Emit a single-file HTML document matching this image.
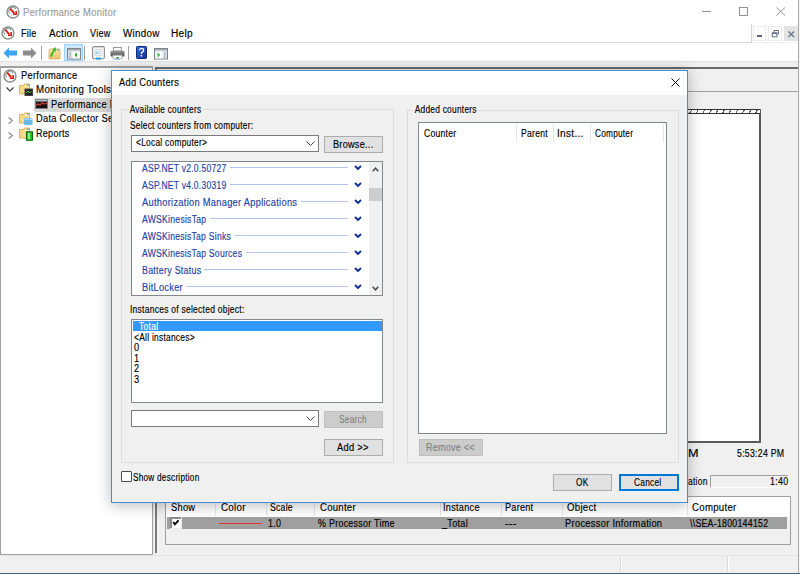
<!DOCTYPE html>
<html><head><meta charset="utf-8">
<style>
*{margin:0;padding:0;box-sizing:border-box}
html,body{width:800px;height:574px;overflow:hidden;background:#F0F0F0;font-family:"Liberation Sans",sans-serif;font-size:10px;color:#000}
.a{position:absolute}
.t{position:absolute;white-space:nowrap;line-height:12px;transform-origin:0 0;-webkit-text-stroke:0.15px currentColor;letter-spacing:0.3px}
.btn{position:absolute;background:#E1E1E1;border:1px solid #ADADAD}
.dis{background:#CCCCCC;border-color:#BFBFBF}
.hl{position:absolute;height:1px}
.vl{position:absolute;width:1px}
</style></head><body>
<!-- ===== main window title + menu ===== -->
<div class="a" style="left:0;top:0;width:800px;height:42px;background:#fff"></div>
<svg class="a" style="left:6px;top:4.5px" width="14" height="14" viewBox="0 0 14 14"><circle cx="7" cy="7" r="6" fill="#fff" stroke="#8c8c8c" stroke-width="1.4"/><path d="M3.6 8.6 A4 4 0 0 1 10 3.8" fill="none" stroke="#6f8f80" stroke-width="1"/><path d="M4.2 3.6 L8.2 8.4" stroke="#e01818" stroke-width="1.9" fill="none"/><path d="M7 9.2 H10.2 V6" stroke="#e01818" stroke-width="1.6" fill="none"/></svg>
<div class="t" style="left:23.01px;top:6.90px;color:#9a9a9a;font-size:10px;transform:scaleX(0.943)">Performance Monitor</div>
<div class="hl" style="left:702px;top:11px;width:9px;background:#909090"></div>
<div class="a" style="left:739px;top:7px;width:9px;height:9px;border:1px solid #909090"></div>
<svg class="a" style="left:776px;top:7px" width="10" height="9"><path d="M0.5 0.5 L9 8.5 M9 0.5 L0.5 8.5" stroke="#909090" stroke-width="1"/></svg>

<svg class="a" style="left:1.2px;top:26.3px" width="14" height="14" viewBox="0 0 14 14"><circle cx="7" cy="7" r="6" fill="#fff" stroke="#8c8c8c" stroke-width="1.4"/><path d="M3.6 8.6 A4 4 0 0 1 10 3.8" fill="none" stroke="#6f8f80" stroke-width="1"/><path d="M4.2 3.6 L8.2 8.4" stroke="#e01818" stroke-width="1.9" fill="none"/><path d="M7 9.2 H10.2 V6" stroke="#e01818" stroke-width="1.6" fill="none"/></svg>
<div class="t" style="left:20.65px;top:27.90px;font-size:10px;transform:scaleX(0.905)">File</div>
<div class="t" style="left:48.71px;top:27.90px;font-size:10px;transform:scaleX(0.986)">Action</div>
<div class="t" style="left:89.93px;top:27.90px;font-size:10px;transform:scaleX(0.905)">View</div>
<div class="t" style="left:123.23px;top:27.90px;font-size:10px;transform:scaleX(0.980)">Window</div>
<div class="t" style="left:171.14px;top:27.90px;font-size:10px;transform:scaleX(1.010)">Help</div>
<div class="hl" style="left:0;top:42px;width:752px;background:#D5D5D5"></div>
<div class="vl" style="left:751px;top:24px;height:19px;background:#D5D5D5"></div>
<div class="a" style="left:753px;top:26px;width:13px;height:15px;background:#fff;border:1px solid #ececec"></div>
<div class="hl" style="left:757px;top:35px;width:5px;height:1.5px;background:#56667c"></div>
<div class="a" style="left:768px;top:26px;width:14px;height:15px;background:#fff;border:1px solid #ececec"></div>
<svg class="a" style="left:771px;top:29px" width="9" height="9"><path d="M3 3 V1.5 H7.5 V5 H6" fill="none" stroke="#5e6e84" stroke-width="1"/><rect x="1.3" y="3.8" width="4.6" height="4" fill="none" stroke="#5e6e84" stroke-width="1"/><path d="M1.3 4.3 H5.9" stroke="#5e6e84" stroke-width="1.2"/></svg>
<div class="a" style="left:784px;top:26px;width:14px;height:15px;background:#E3E3E3"></div>
<svg class="a" style="left:788px;top:30.5px" width="7" height="7"><path d="M0.5 0.5 L6 6 M6 0.5 L0.5 6" stroke="#5e6e84" stroke-width="1.1"/></svg>

<!-- ===== toolbar ===== -->
<div class="a" style="left:0;top:43px;width:798px;height:18px;background:#fff"></div>
<div class="hl" style="left:0;top:61px;width:798px;background:#E3E3E3"></div>
<svg class="a" style="left:3px;top:47px" width="15" height="12" viewBox="0 0 15 12"><path d="M0.5 6 L6 0.5 V3.5 H14 V8.5 H6 V11.5 Z" fill="#3da4f2"/></svg>
<svg class="a" style="left:22px;top:47px" width="15" height="12" viewBox="0 0 15 12"><path d="M14.5 6 L9 0.5 V3.5 H1 V8.5 H9 V11.5 Z" fill="#8c8c8c"/></svg>
<div class="vl" style="left:41px;top:46px;height:14px;background:#A0A0A0"></div>
<svg class="a" style="left:48px;top:46px" width="13" height="14"><defs><linearGradient id="fg" x1="0" y1="0" x2="0" y2="1"><stop offset="0" stop-color="#fbe7a8"/><stop offset="1" stop-color="#eac36c"/></linearGradient></defs><rect x="1" y="3" width="11" height="10" rx="0.5" fill="url(#fg)" stroke="#d9b466" stroke-width="0.8"/><path d="M2.3 10.2 Q3.2 6.3 5.4 4.4 L4.6 3.2 L7.9 1.6 L7.6 5.3 L6.6 4.9 Q4.7 7 3.9 10.4 Z" fill="#3cc43c" stroke="#23a023" stroke-width="0.4"/><rect x="9" y="3.2" width="2.2" height="1.6" fill="#7aa6d0"/></svg>
<div class="a" style="left:64px;top:44px;width:19px;height:17px;background:#CCE8FF;border:1px solid #99D1FF"></div>
<svg class="a" style="left:66.5px;top:48px" width="14" height="12"><rect x="0.5" y="0.5" width="13" height="10.5" fill="#e6e8ea" stroke="#7d8288"/><rect x="1" y="1" width="12" height="1.6" fill="#a9aeb5"/><rect x="1.5" y="3.6" width="3" height="6.8" fill="#d8dde3"/><rect x="2.2" y="4.5" width="1.6" height="0.9" fill="#7fa4c8"/><rect x="2.2" y="6.5" width="1.6" height="0.9" fill="#7fa4c8"/><rect x="2.2" y="8.5" width="1.6" height="0.9" fill="#7fa4c8"/><rect x="5.5" y="3.6" width="7" height="6.8" fill="#fff"/><path d="M10 4.6 L7.3 7 L10 9.4 Z" fill="#2eb82e"/></svg>
<div class="vl" style="left:84px;top:46px;height:14px;background:#A0A0A0"></div>
<svg class="a" style="left:91.5px;top:46px" width="13" height="14"><rect x="0.6" y="0.6" width="11.8" height="12.2" rx="1.5" fill="#f6f6f6" stroke="#8c8c8c" stroke-width="1.1"/><path d="M2.5 3.5 H10.5 M2.5 5.5 H10.5 M2.5 7.5 H10.5 M2.5 9.5 H10.5" stroke="#c9d3dc" stroke-width="0.8"/><path d="M5 3 V10.5 M7.5 3 V10.5" stroke="#d5dde4" stroke-width="0.6"/><rect x="3.5" y="6" width="2" height="2" fill="#8cc8ee"/><rect x="4" y="11.6" width="5" height="2" fill="#2a9ee0"/></svg>
<svg class="a" style="left:109.5px;top:46.5px" width="15" height="13"><rect x="3.5" y="0.5" width="8" height="3.5" fill="#fbfbfb" stroke="#9a9a9a"/><defs><linearGradient id="pg" x1="0" y1="0" x2="0" y2="1"><stop offset="0" stop-color="#9a9a9a"/><stop offset="1" stop-color="#4a4a4a"/></linearGradient></defs><rect x="0.5" y="3.8" width="14" height="5.6" rx="1" fill="url(#pg)"/><rect x="3" y="8.2" width="9" height="3.6" fill="#fff" stroke="#a8a8a8" stroke-width="0.8"/><path d="M6 10 L7.5 11.8 L9 10 Z" fill="#1f8a56"/><path d="M5 12.2 H10" stroke="#6ab4e8" stroke-width="0.9"/></svg>
<div class="vl" style="left:128px;top:46px;height:14px;background:#A0A0A0"></div>
<svg class="a" style="left:136px;top:46px" width="11" height="13"><defs><linearGradient id="hg" x1="0" y1="0" x2="1" y2="1"><stop offset="0" stop-color="#3b6ee0"/><stop offset="1" stop-color="#12308f"/></linearGradient></defs><rect x="0.5" y="0.5" width="10" height="12" rx="0.8" fill="url(#hg)" stroke="#0f2a7a"/><path d="M3.6 4.3 Q3.8 2.3 5.7 2.3 Q7.7 2.4 7.6 4.2 Q7.5 5.4 6.2 6.1 Q5.4 6.6 5.4 8" fill="none" stroke="#fff" stroke-width="1.3"/><rect x="4.7" y="9" width="1.5" height="1.5" fill="#fff"/></svg>
<svg class="a" style="left:154px;top:48px" width="14" height="12"><rect x="0.5" y="0.5" width="13" height="10.5" fill="#e6e8ea" stroke="#7d8288"/><rect x="1" y="1" width="12" height="1.6" fill="#a9aeb5"/><rect x="9.5" y="3.6" width="3" height="6.8" fill="#d8dde3"/><rect x="10.2" y="4.5" width="1.6" height="0.9" fill="#7fa4c8"/><rect x="10.2" y="6.5" width="1.6" height="0.9" fill="#7fa4c8"/><rect x="10.2" y="8.5" width="1.6" height="0.9" fill="#7fa4c8"/><rect x="1.5" y="3.6" width="7" height="6.8" fill="#fff"/><path d="M3.5 4.6 L6.2 7 L3.5 9.4 Z" fill="#2eb82e"/></svg>

<!-- ===== tree panel ===== -->
<div class="a" style="left:0;top:66px;width:153px;height:489px;background:#fff;border-top:2px solid #A0A0A0;border-left:1px solid #A0A0A0;border-right:1px solid #A0A0A0;border-bottom:1px solid #A0A0A0"></div>
<svg class="a" style="left:3.2px;top:68.5px" width="14" height="14" viewBox="0 0 14 14"><circle cx="7" cy="7" r="6" fill="#fff" stroke="#8c8c8c" stroke-width="1.4"/><path d="M3.6 8.6 A4 4 0 0 1 10 3.8" fill="none" stroke="#6f8f80" stroke-width="1"/><path d="M4.2 3.6 L8.2 8.4" stroke="#e01818" stroke-width="1.9" fill="none"/><path d="M7 9.2 H10.2 V6" stroke="#e01818" stroke-width="1.6" fill="none"/></svg>
<div class="t" style="left:20.72px;top:69.50px;font-size:10px;transform:scaleX(0.932)">Performance</div>
<svg class="a" style="left:6px;top:87px" width="8" height="6"><path d="M0.5 0.5 L4 4 L7.5 0.5" fill="none" stroke="#404040" stroke-width="1.2"/></svg>
<svg class="a" style="left:19px;top:83px" width="14" height="14"><path d="M0.5 2.5 H4.5 L5.5 1 H10.5 V11 H0.5 Z" fill="#f6d98a" stroke="#d9b25c"/><path d="M6 2.5 H10 V4 H6 Z" fill="#fff3c8"/><circle cx="9" cy="2.2" r="0.9" fill="#5aa0e0"/><rect x="6" y="6" width="7.5" height="6.5" fill="#222" stroke="#444"/><path d="M7 10 L9 8 L10.5 10 L12.5 8" stroke="#3ed23e" fill="none"/></svg>
<div class="t" style="left:35.64px;top:83.70px;font-size:10px;transform:scaleX(0.972)">Monitoring Tools</div>
<div class="a" style="left:34px;top:98px;width:78px;height:14px;background:#D9D9D9"></div>
<svg class="a" style="left:35px;top:99px" width="13" height="10"><rect x="0.5" y="0.5" width="12" height="9" fill="#1a1212" stroke="#808080"/><rect x="1" y="1" width="11" height="1.5" fill="#b8c0c8"/><path d="M1 6.5 L3 5 L5 6 L7 3.8 L9 5 L12 4.5" stroke="#e23b3b" fill="none" stroke-width="1.1"/></svg>
<div class="t" style="left:50.73px;top:98.70px;font-size:10px;transform:scaleX(0.923)">Performance Monitor</div>
<svg class="a" style="left:8px;top:117px" width="6" height="8"><path d="M0.6 0.5 L4.4 3.6 L0.6 6.8" fill="none" stroke="#8a8a8a" stroke-width="1.2"/></svg>
<svg class="a" style="left:19px;top:112px" width="14" height="14"><path d="M0.5 2.5 H4.5 L5.5 1 H10.5 V11 H0.5 Z" fill="#f6d98a" stroke="#d9b25c"/><path d="M6 2.5 H10 V4 H6 Z" fill="#fff3c8"/><circle cx="9" cy="2.2" r="0.9" fill="#5aa0e0"/><path d="M5 6.5 Q8.5 5 13.5 6.5 V12.5 Q8.5 14 5 12.5 Z" fill="#6ab8e8"/><path d="M5.5 7.5 Q8.5 6.3 13 7.5" stroke="#c8e6f8" fill="none"/></svg>
<div class="t" style="left:35.67px;top:113.00px;font-size:10px;transform:scaleX(0.928)">Data Collector Sets</div>
<svg class="a" style="left:8px;top:132px" width="6" height="8"><path d="M0.6 0.5 L4.4 3.6 L0.6 6.8" fill="none" stroke="#8a8a8a" stroke-width="1.2"/></svg>
<svg class="a" style="left:19px;top:127px" width="14" height="15"><path d="M0.5 2.5 H4.5 L5.5 1 H10.5 V11 H0.5 Z" fill="#f6d98a" stroke="#d9b25c"/><path d="M6 2.5 H10 V4 H6 Z" fill="#fff3c8"/><circle cx="9" cy="2.2" r="0.9" fill="#5aa0e0"/><rect x="7.5" y="4.8" width="6" height="8.5" fill="#22c022" stroke="#0a6a0a"/><rect x="9" y="6" width="2" height="6" fill="#8ef08e"/></svg>
<div class="t" style="left:35.75px;top:127.50px;font-size:10px;transform:scaleX(0.903)">Reports</div>

<!-- ===== right panel ===== -->
<div class="vl" style="left:155px;top:67px;height:486px;width:2px;background:#7a7a7a"></div>
<div class="a" style="left:155px;top:67px;width:643px;height:2px;background:#6a6a6a"></div>
<div class="hl" style="left:158px;top:91px;width:640px;background:#A0A0A0"></div>
<div class="vl" style="left:798px;top:0;height:574px;background:#ABABAB"></div><div class="vl" style="left:799px;top:0;height:574px;background:#F4F4F4"></div>
<!-- graph -->
<div class="a" style="left:600px;top:109px;width:161px;height:334px;background:#fff;border-right:2px solid #5a5a5a;border-bottom:2px solid #5a5a5a"></div>
<div class="a" style="left:600px;top:109px;width:160px;height:5px;border-top:1px solid #303030;border-bottom:1px solid #303030;background:repeating-linear-gradient(120deg,#fff 0 4.6px,#606060 4.6px 5.7px)"></div>
<div class="t" style="left:687.61px;top:447.90px;font-size:10px;transform:scaleX(1.267)">M</div>
<div class="t" style="left:736.72px;top:447.90px;font-size:10px;transform:scaleX(0.875)">5:53:24 PM</div>
<div class="t" style="left:687.60px;top:475.70px;font-size:10px;transform:scaleX(0.849)">ation</div>
<div class="a" style="left:710px;top:475px;width:79px;height:13px;border-top:1px solid #A0A0A0;border-left:1px solid #A0A0A0;border-bottom:1px solid #fff;border-right:1px solid #fff"></div>
<div class="t" style="left:770.24px;top:475.70px;font-size:10px;transform:scaleX(0.890)">1:40</div>
<!-- legend -->
<div class="a" style="left:165px;top:496px;width:626px;height:49px;border:1px solid #A0A0A0;background:#F0F0F0"></div>
<div class="a" style="left:166px;top:497px;width:624px;height:20px;background:#fff"></div>
<div class="vl" style="left:215px;top:498px;height:18px;background:#E5E5E5"></div>
<div class="vl" style="left:266px;top:498px;height:18px;background:#E5E5E5"></div>
<div class="vl" style="left:314px;top:498px;height:18px;background:#E5E5E5"></div>
<div class="vl" style="left:440px;top:498px;height:18px;background:#E5E5E5"></div>
<div class="vl" style="left:501px;top:498px;height:18px;background:#E5E5E5"></div>
<div class="vl" style="left:562px;top:498px;height:18px;background:#E5E5E5"></div>
<div class="vl" style="left:687px;top:498px;height:18px;background:#E5E5E5"></div>
<div class="t" style="left:170.95px;top:501.90px;font-size:10px;transform:scaleX(0.928)">Show</div>
<div class="t" style="left:220.50px;top:501.90px;font-size:10px;transform:scaleX(0.976)">Color</div>
<div class="t" style="left:269.99px;top:501.90px;font-size:10px;transform:scaleX(0.863)">Scale</div>
<div class="t" style="left:319.61px;top:501.90px;font-size:10px;transform:scaleX(0.952)">Counter</div>
<div class="t" style="left:443.46px;top:501.90px;font-size:10px;transform:scaleX(0.914)">Instance</div>
<div class="t" style="left:505.45px;top:501.90px;font-size:10px;transform:scaleX(0.908)">Parent</div>
<div class="t" style="left:567.14px;top:501.90px;font-size:10px;transform:scaleX(0.963)">Object</div>
<div class="t" style="left:691.61px;top:501.90px;font-size:10px;transform:scaleX(0.963)">Computer</div>
<div class="a" style="left:167px;top:517px;width:620px;height:12px;background:#A0A0A0"></div>
<div class="a" style="left:170px;top:517px;width:12px;height:12px;background:#EDEDED"></div><div class="a" style="left:170px;top:517px;width:11px;height:11px;background:#fff;border-top:2px solid #8a8a8a;border-left:2px solid #8a8a8a"></div>
<svg class="a" style="left:170px;top:517px" width="12" height="12"><path d="M3.2 5.2 L4.9 7.3 L8.5 3.3" fill="none" stroke="#000" stroke-width="2"/></svg>
<div class="hl" style="left:219px;top:523px;width:43px;background:#E03535;height:1px"></div>
<div class="t" style="left:268.33px;top:517.90px;font-size:10px;transform:scaleX(0.894)">1.0</div>
<div class="t" style="left:318.42px;top:517.90px;font-size:10px;transform:scaleX(0.892)">% Processor Time</div>
<div class="t" style="left:442.15px;top:517.90px;font-size:10px;transform:scaleX(0.910)">_Total</div>
<div class="t" style="left:505.01px;top:517.90px;font-size:10px;transform:scaleX(1.059)">---</div>
<div class="t" style="left:565.02px;top:517.90px;font-size:10px;transform:scaleX(0.935)">Processor Information</div>
<div class="t" style="left:689.82px;top:517.90px;font-size:10px;transform:scaleX(0.877)">\\SEA-1800144152</div>
<!-- status bar -->
<div class="hl" style="left:0;top:555px;width:798px;background:#E3E3E3"></div>
<div class="vl" style="left:620px;top:556px;height:16px;background:#DADADA"></div><div class="vl" style="left:621px;top:556px;height:16px;background:#fff"></div><div class="vl" style="left:727px;top:556px;height:16px;background:#DADADA"></div><div class="vl" style="left:728px;top:556px;height:16px;background:#fff"></div>
<div class="a" style="left:0;top:573px;width:800px;height:1px;background:#3f5f7a"></div>

<!-- ===== dialog ===== -->
<div id="dlg" class="a" style="left:111px;top:70px;width:577px;height:433px;background:#F0F0F0;border:1px solid #3D8FDB;box-shadow:0 2px 14px rgba(0,0,0,0.28)">
</div>
<div class="a" style="left:112px;top:71px;width:575px;height:24px;background:#fff"></div>
<div class="t" style="left:118.53px;top:77.00px;font-size:10px;transform:scaleX(0.929)">Add Counters</div>
<svg class="a" style="left:671px;top:78px" width="9" height="9"><path d="M0.5 0.5 L8.5 8.5 M8.5 0.5 L0.5 8.5" stroke="#111" stroke-width="1"/></svg>

<!-- left group -->
<div class="a" style="left:121px;top:109px;width:273px;height:354px;border:1px solid #DCDCDC"></div>
<div class="t" style="left:127.76px;top:103.80px;background:#F0F0F0;padding:0 2px;font-size:10px;transform:scaleX(0.824)">Available counters</div>
<div class="t" style="left:130.21px;top:119.70px;font-size:10px;transform:scaleX(0.833)">Select counters from computer:</div>
<div class="a" style="left:131px;top:135px;width:188px;height:17px;background:#fff;border:1px solid #7A7A7A"></div>
<div class="t" style="left:135.61px;top:137.30px;font-size:10px;transform:scaleX(0.839)">&lt;Local computer&gt;</div>
<svg class="a" style="left:306px;top:141px" width="9" height="5"><path d="M0.5 0.5 L4.5 4.5 L8.5 0.5" fill="none" stroke="#404040" stroke-width="1"/></svg>
<div class="btn" style="left:324px;top:136px;width:59px;height:17px"></div>
<div class="t" style="left:332.75px;top:138.50px;font-size:10px;transform:scaleX(0.912)">Browse...</div>

<div class="a" style="left:131px;top:161px;width:252px;height:135px;background:#fff;border:1px solid #828790"></div>
<div class="a" style="left:369px;top:162px;width:13px;height:133px;background:#F0F0F0"></div>
<svg class="a" style="left:371.5px;top:167px" width="7" height="5"><path d="M0.7 4.2 L3.5 1.2 L6.3 4.2" fill="none" stroke="#4a4a4a" stroke-width="1.5"/></svg>
<div class="a" style="left:369px;top:188px;width:13px;height:13px;background:#CDCDCD"></div>
<svg class="a" style="left:371.5px;top:285.5px" width="7" height="5"><path d="M0.7 0.8 L3.5 3.8 L6.3 0.8" fill="none" stroke="#4a4a4a" stroke-width="1.5"/></svg>

<div class="t" style="left:142.25px;top:162.75px;color:#1E3FA6;font-size:10px;transform:scaleX(0.854)">ASP.NET v2.0.50727</div>
<div class="hl" style="left:230px;top:167px;width:118px;background:#B4C6EC"></div>
<svg class="a" style="left:354px;top:165px" width="8" height="6"><path d="M1 1 L4 4 L7 1" fill="none" stroke="#0A2A9A" stroke-width="1.8"/></svg>
<div class="t" style="left:142.25px;top:179.75px;color:#1E3FA6;font-size:10px;transform:scaleX(0.854)">ASP.NET v4.0.30319</div>
<div class="hl" style="left:230px;top:184px;width:118px;background:#B4C6EC"></div>
<svg class="a" style="left:354px;top:182px" width="8" height="6"><path d="M1 1 L4 4 L7 1" fill="none" stroke="#0A2A9A" stroke-width="1.8"/></svg>
<div class="t" style="left:142.23px;top:196.75px;color:#1E3FA6;font-size:10px;transform:scaleX(0.930)">Authorization Manager Applications</div>
<div class="hl" style="left:301px;top:201px;width:47px;background:#B4C6EC"></div>
<svg class="a" style="left:354px;top:199px" width="8" height="6"><path d="M1 1 L4 4 L7 1" fill="none" stroke="#0A2A9A" stroke-width="1.8"/></svg>
<div class="t" style="left:142.25px;top:213.75px;color:#1E3FA6;font-size:10px;transform:scaleX(0.862)">AWSKinesisTap</div>
<div class="hl" style="left:210px;top:218px;width:138px;background:#B4C6EC"></div>
<svg class="a" style="left:354px;top:216px" width="8" height="6"><path d="M1 1 L4 4 L7 1" fill="none" stroke="#0A2A9A" stroke-width="1.8"/></svg>
<div class="t" style="left:142.25px;top:230.75px;color:#1E3FA6;font-size:10px;transform:scaleX(0.859)">AWSKinesisTap Sinks</div>
<div class="hl" style="left:234px;top:235px;width:114px;background:#B4C6EC"></div>
<svg class="a" style="left:354px;top:233px" width="8" height="6"><path d="M1 1 L4 4 L7 1" fill="none" stroke="#0A2A9A" stroke-width="1.8"/></svg>
<div class="t" style="left:142.25px;top:247.75px;color:#1E3FA6;font-size:10px;transform:scaleX(0.860)">AWSKinesisTap Sources</div>
<div class="hl" style="left:246px;top:252px;width:102px;background:#B4C6EC"></div>
<svg class="a" style="left:354px;top:250px" width="8" height="6"><path d="M1 1 L4 4 L7 1" fill="none" stroke="#0A2A9A" stroke-width="1.8"/></svg>
<div class="t" style="left:141.57px;top:264.75px;color:#1E3FA6;font-size:10px;transform:scaleX(0.886)">Battery Status</div>
<div class="hl" style="left:204px;top:269px;width:144px;background:#B4C6EC"></div>
<svg class="a" style="left:354px;top:267px" width="8" height="6"><path d="M1 1 L4 4 L7 1" fill="none" stroke="#0A2A9A" stroke-width="1.8"/></svg>
<div class="t" style="left:141.54px;top:281.75px;color:#1E3FA6;font-size:10px;transform:scaleX(0.921)">BitLocker</div>
<div class="hl" style="left:186px;top:286px;width:162px;background:#B4C6EC"></div>
<svg class="a" style="left:354px;top:284px" width="8" height="6"><path d="M1 1 L4 4 L7 1" fill="none" stroke="#0A2A9A" stroke-width="1.8"/></svg>

<div class="t" style="left:129.74px;top:303.80px;font-size:10px;transform:scaleX(0.849)">Instances of selected object:</div>
<div class="a" style="left:131px;top:319px;width:252px;height:84px;background:#fff;border:1px solid #828790"></div>
<div class="a" style="left:133px;top:321px;width:249px;height:10px;background:#3399FF"></div>
<div class="t" style="left:134.16px;top:321.10px;color:#fff;font-size:10px;transform:scaleX(0.855)">_Total</div>
<div class="t" style="left:133.91px;top:331.70px;font-size:10px;transform:scaleX(0.842)">&lt;All instances&gt;</div>
<div class="t" style="left:133.90px;top:342.30px;font-size:10px;transform:scaleX(0.920)">0</div>
<div class="t" style="left:133.70px;top:352.70px;font-size:10px;transform:scaleX(0.920)">1</div>
<div class="t" style="left:133.83px;top:363.20px;font-size:10px;transform:scaleX(0.920)">2</div>
<div class="t" style="left:133.79px;top:373.80px;font-size:10px;transform:scaleX(0.920)">3</div>

<div class="a" style="left:131px;top:410px;width:188px;height:17px;background:#fff;border:1px solid #7A7A7A"></div>
<svg class="a" style="left:306px;top:416px" width="9" height="5"><path d="M0.5 0.5 L4.5 4.5 L8.5 0.5" fill="none" stroke="#404040" stroke-width="1"/></svg>
<div class="btn dis" style="left:324px;top:411px;width:59px;height:17px"></div>
<div class="t" style="left:339.31px;top:413.70px;color:#838383;font-size:10px;transform:scaleX(0.829)">Search</div>
<div class="btn" style="left:324px;top:439px;width:59px;height:17px"></div>
<div class="t" style="left:337.23px;top:442.20px;font-size:10px;transform:scaleX(0.933)">Add &gt;&gt;</div>

<!-- right group -->
<div class="a" style="left:407px;top:110px;width:272px;height:353px;border:1px solid #DCDCDC"></div>
<div class="t" style="left:413.16px;top:104.10px;background:#F0F0F0;padding:0 2px;font-size:10px;transform:scaleX(0.836)">Added counters</div>
<div class="a" style="left:418px;top:122px;width:249px;height:312px;background:#fff;border:1px solid #828790"></div>
<div class="vl" style="left:516px;top:124px;height:18px;background:#E5E5E5"></div>
<div class="vl" style="left:553px;top:124px;height:18px;background:#E5E5E5"></div>
<div class="vl" style="left:590px;top:124px;height:18px;background:#E5E5E5"></div>
<div class="vl" style="left:663px;top:124px;height:18px;background:#E5E5E5"></div>
<div class="t" style="left:424.16px;top:127.90px;font-size:10px;transform:scaleX(0.861)">Counter</div>
<div class="t" style="left:521.00px;top:127.90px;font-size:10px;transform:scaleX(0.861)">Parent</div>
<div class="t" style="left:557.45px;top:127.90px;font-size:10px;transform:scaleX(1.006)">Inst...</div>
<div class="t" style="left:594.58px;top:127.90px;font-size:10px;transform:scaleX(0.825)">Computer</div>
<div class="btn dis" style="left:419px;top:439px;width:64px;height:17px"></div>
<div class="t" style="left:425.66px;top:442.30px;color:#838383;font-size:10px;transform:scaleX(0.898)">Remove &lt;&lt;</div>

<div class="a" style="left:121px;top:471px;width:11px;height:11px;background:#fff;border:1px solid #4a4a4a;border-radius:1px"></div>
<div class="t" style="left:133.31px;top:471.70px;font-size:10px;transform:scaleX(0.821)">Show description</div>
<div class="btn" style="left:553px;top:474px;width:59px;height:17px"></div>
<div class="t" style="left:575.60px;top:477.00px;font-size:10px;transform:scaleX(0.833)">OK</div>
<div class="btn" style="left:619px;top:474px;width:60px;height:17px;border:2px solid #0078D7"></div>
<div class="t" style="left:634.17px;top:477.00px;font-size:10px;transform:scaleX(0.834)">Cancel</div>
</body></html>
